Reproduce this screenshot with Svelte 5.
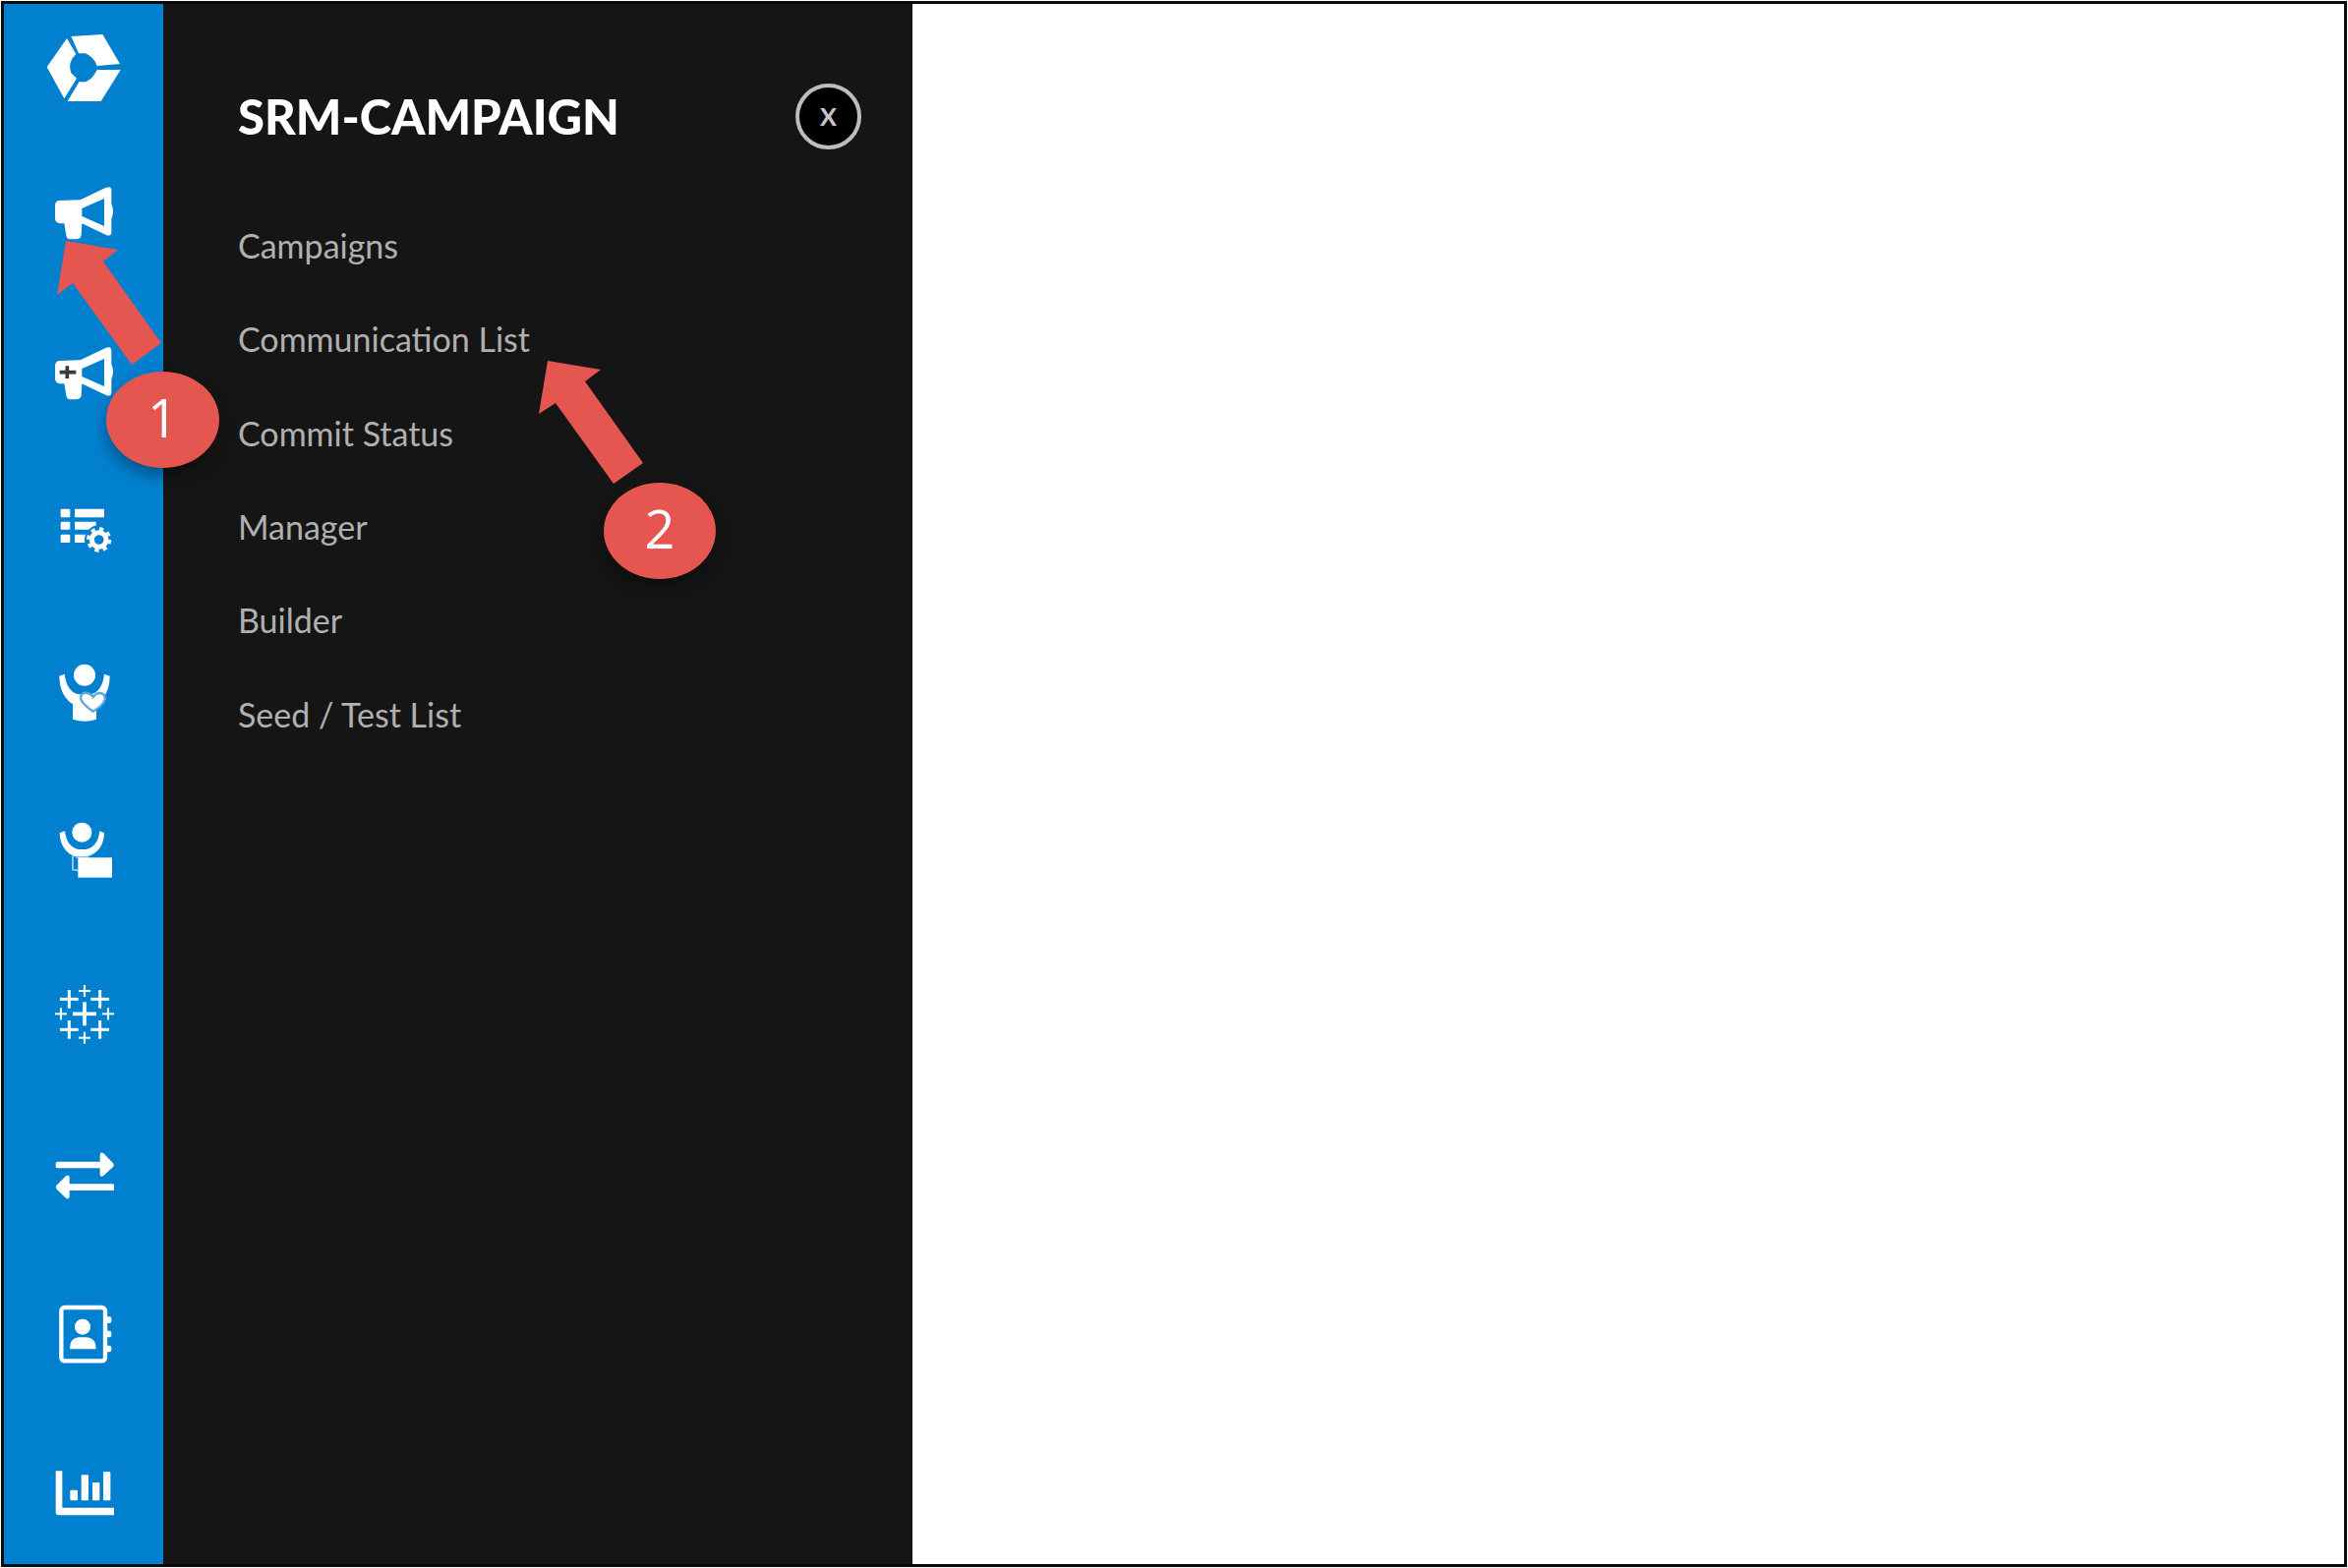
<script lang="ts">
  const menuItems = ['Campaigns', 'Communication List', 'Commit Status', 'Manager', 'Builder', 'Seed / Test List'];

  const tableauPluses = [
    { x: 258, y: 215, arm: 36, w: 11 },
    { x: 211, y: 170, arm: 28, w: 9 },
    { x: 305, y: 170, arm: 28, w: 9 },
    { x: 211, y: 263, arm: 28, w: 9 },
    { x: 305, y: 263, arm: 28, w: 9 },
    { x: 258, y: 145, arm: 18, w: 6 },
    { x: 258, y: 288, arm: 18, w: 6 },
    { x: 186, y: 215, arm: 18, w: 6 },
    { x: 330, y: 215, arm: 18, w: 6 }
  ];
</script>

{#snippet megaphone()}
  <path fill-rule="evenodd" d="M180 612 L245 610 L322 573 Q340 566 340 582 L340 622 Q350 645 340 668 L340 708 Q340 724 322 716 L250 682 L248 718 Q246 730 232 730 L212 730 Q203 728 202 718 L196 682 L182 682 Q168 680 168 664 L168 628 Q168 614 180 612 Z M250 636 L250 660 L318 690 L318 606 Z" />
{/snippet}

<div class="frame">
  <nav class="rail">
    <div class="logo">
      <svg class="icon" width="84" height="84" viewBox="132 78 252 252">
        <path d="M217 108 L313 102 L366 192 L296 198 Q286 170 260 160 L240 160 Z" />
        <path d="M204 114 L232 162 Q206 186 216 218 L234 236 L196 298 L143 202 Z" />
        <path d="M206 306 L242 246 Q276 254 296 210 L368 210 L308 306 Z" />
      </svg>
    </div>

    <button class="rail-btn" aria-label="Campaign">
      <svg class="icon" width="84" height="84" viewBox="132 522 252 252">
        {@render megaphone()}
      </svg>
    </button>

    <button class="rail-btn" aria-label="New campaign">
      <svg class="icon" width="84" height="84" viewBox="132 522 252 252">
        {@render megaphone()}
        <path class="dark-plus" d="M205 628 V666 M182 647 H232" />
      </svg>
    </button>

    <button class="rail-btn" aria-label="Settings list">
      <svg class="icon" width="84" height="84" viewBox="132 60 252 252">
        <rect x="185" y="113" width="29" height="26" rx="3" />
        <rect x="228" y="113" width="90" height="26" rx="2" />
        <rect x="185" y="152" width="29" height="24" rx="3" />
        <rect x="228" y="152" width="65" height="24" rx="2" />
        <rect x="185" y="191" width="29" height="25" rx="3" />
        <rect x="228" y="191" width="40" height="25" rx="2" />
        <circle cx="302" cy="207" r="44" class="cut" />
        <circle cx="302" cy="207" r="22" class="ring" />
        <circle cx="302" cy="207" r="32" class="teeth" />
      </svg>
    </button>

    <button class="rail-btn" aria-label="Donor">
      <svg class="icon" width="84" height="84" viewBox="132 546 252 252">
        <circle cx="258" cy="617" r="33" />
        <path d="M181 620 L197 614 Q204 668 240 676 L276 676 Q312 668 318 614 L335 620 Q334 680 294 704 L294 752 Q260 764 222 752 L222 706 Q182 680 181 620 Z" />
        <path class="heart" d="M284 728 Q246 702 246 686 Q248 668 266 672 Q278 674 284 684 Q292 672 306 672 Q322 674 320 692 Q316 708 284 728 Z" />
      </svg>
    </button>

    <button class="rail-btn" aria-label="Donor box">
      <svg class="icon" width="84" height="84" viewBox="12 498 252 252">
        <circle cx="130" cy="560" r="30" />
        <path d="M62 562 L78 556 Q84 606 120 612 L142 612 Q178 606 184 556 L198 562 Q196 616 152 632 L108 634 Q64 616 62 562 Z" />
        <path class="thin" d="M102 632 L102 674 L118 676 M112 636 H150" />
        <rect x="118" y="637" width="104" height="61" />
      </svg>
    </button>

    <button class="rail-btn" aria-label="Tableau">
      <svg class="icon" width="84" height="84" viewBox="132 88 252 252">
        {#each tableauPluses as p}
          <rect x={p.x - p.arm} y={p.y - p.w / 2} width={p.arm * 2} height={p.w} />
          <rect x={p.x - p.w / 2} y={p.y - p.arm} width={p.w} height={p.arm * 2} />
        {/each}
      </svg>
    </button>

    <button class="rail-btn" aria-label="Transfer">
      <svg class="icon" width="84" height="84" viewBox="132 578 252 252">
        <rect x="170" y="667" width="145" height="20" rx="6" />
        <path d="M305 646 Q305 636 316 642 L344 670 Q350 677 344 684 L316 710 Q305 716 305 706 Z" />
        <rect x="205" y="735" width="143" height="20" rx="4" />
        <path d="M212 716 Q212 704 201 711 L174 738 Q167 745 174 752 L201 778 Q212 784 212 773 Z" />
      </svg>
    </button>

    <button class="rail-btn" aria-label="Contacts">
      <svg class="icon" width="84" height="84" viewBox="132 64 252 252">
        <rect x="187" y="109" width="134" height="163" rx="10" class="book" />
        <circle cx="252" cy="168" r="24" />
        <path d="M213 236 Q213 202 240 200 L264 200 Q293 202 293 236 Z" />
        <rect x="322" y="137" width="18" height="20" rx="6" />
        <rect x="322" y="180" width="18" height="20" rx="6" />
        <rect x="322" y="225" width="18" height="20" rx="6" />
      </svg>
    </button>

    <button class="rail-btn" aria-label="Reports">
      <svg class="icon" width="84" height="84" viewBox="132 555 252 252">
        <path d="M170 610 H190 V722 H348 V745 H180 Q170 745 170 735 Z" />
        <rect x="214" y="668" width="23" height="32" rx="4" />
        <rect x="248" y="622" width="22" height="78" rx="3" />
        <rect x="282" y="645" width="22" height="55" rx="3" />
        <rect x="315" y="612" width="22" height="88" rx="3" />
      </svg>
    </button>
  </nav>

  <aside class="panel">
    <header class="panel-head">
      <h1>SRM-CAMPAIGN</h1>
      <button class="close">x</button>
    </header>
    <ul>
      {#each menuItems as item}
        <li>{item}</li>
      {/each}
    </ul>
  </aside>

  <main class="content"></main>

  <!-- callout annotations drawn over the screenshot -->
  <svg class="arrows" width="2388" height="1595" viewBox="0 0 2388 1595">
    <polygon points="67,245 120,254 105,266 164,349 134,371 74,288 58,300" />
    <polygon points="557,367 611,376 595,388 654,471 624,492 565,410 548,421" />
  </svg>
  <div class="badge one">1</div>
  <div class="badge two">2</div>
</div>

<style>
  :global(body) {
    margin: 0;
    background: #fff;
  }

  .frame {
    position: relative;
    width: 2386px;
    height: 1593px;
    margin: 1px 0 0 1px;
    box-sizing: border-box;
    border: 3px solid #0a0a0a;
    display: flex;
    overflow: hidden;
    background: #fff;
    font-family: Lato, 'Noto Sans', sans-serif;
  }

  .rail {
    width: 162px;
    flex-shrink: 0;
    box-sizing: border-box;
    padding-left: 2px;
    background: #0280d0;
    display: flex;
    flex-direction: column;
    align-items: center;
  }

  .logo {
    height: 130px;
    flex-shrink: 0;
    display: flex;
    align-items: center;
    justify-content: center;
  }

  .rail-btn {
    height: 163px;
    flex-shrink: 0;
    padding: 0;
    border: 0;
    background: none;
    display: flex;
    align-items: center;
    justify-content: center;
  }

  .icon {
    fill: #fff;
    filter: blur(0.6px);
  }

  .dark-plus {
    fill: none;
    stroke: #33393f;
    stroke-width: 11;
  }

  .cut {
    fill: #0280d0;
  }

  .ring {
    fill: none;
    stroke: #fff;
    stroke-width: 15;
  }

  .teeth {
    fill: none;
    stroke: #fff;
    stroke-width: 12;
    stroke-dasharray: 12.5 12.6;
  }

  .heart {
    stroke: #5ba8dd;
    stroke-width: 7;
  }

  .thin {
    fill: none;
    stroke: #8cc3e8;
    stroke-width: 6;
  }

  .book {
    fill: none;
    stroke: #fff;
    stroke-width: 13;
  }

  .panel {
    width: 762px;
    flex-shrink: 0;
    box-sizing: border-box;
    padding-left: 76px;
    background: #151515;
  }

  .panel-head {
    display: flex;
    align-items: center;
    justify-content: space-between;
    padding: 81px 52px 0 0;
  }

  h1 {
    margin: 0;
    font-size: 49px;
    line-height: 67px;
    font-weight: 900;
    color: #fff;
  }

  .close {
    width: 67px;
    height: 67px;
    box-sizing: border-box;
    padding: 0 0 8px;
    border: 4px solid #bdbdbd;
    border-radius: 50%;
    background: #000;
    color: #c4c4c4;
    font-family: inherit;
    font-size: 34px;
    font-weight: 600;
  }

  ul {
    list-style: none;
    margin: 50px 0 0;
    padding: 0;
  }

  li {
    height: 95.3px;
    display: flex;
    align-items: center;
    font-size: 34px;
    color: #b0b0b0;
  }

  .content {
    flex: 1;
    background: #fff;
  }

  .arrows {
    position: absolute;
    left: -4px;
    top: -4px;
    fill: #e55651;
    pointer-events: none;
  }

  .badge {
    position: absolute;
    box-sizing: border-box;
    padding-bottom: 6px;
    display: flex;
    align-items: center;
    justify-content: center;
    border-radius: 50%;
    background: #e55651;
    color: #fff;
    font-family: 'Open Sans', sans-serif;
    font-size: 54px;
    box-shadow: 0 8px 16px rgba(0, 0, 0, 0.35);
  }

  .one {
    left: 104px;
    top: 374px;
    width: 115px;
    height: 98px;
  }

  .two {
    left: 610px;
    top: 487px;
    width: 114px;
    height: 98px;
  }
</style>
